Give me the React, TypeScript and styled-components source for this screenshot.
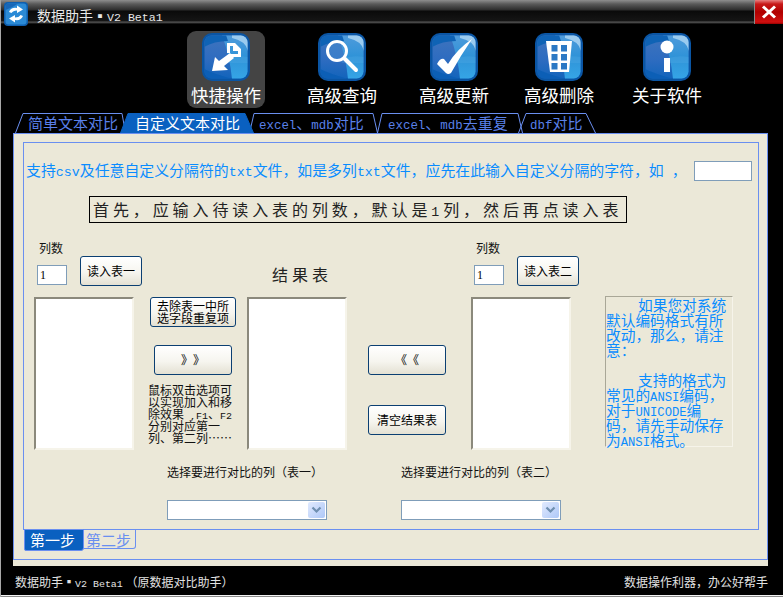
import React from "react";
import styled, { createGlobalStyle } from "styled-components";

const CJK = `"Noto Sans CJK SC", "Liberation Sans", sans-serif`;
const BLUE_LINE = "#6a8ff0";
const TEXT_BLUE = "#0a8cff";

const Global = createGlobalStyle`
  html, body { margin: 0; padding: 0; background: #000; }
  body { font-family: ${CJK}; text-spacing-trim: space-all; text-autospace: no-autospace; font-feature-settings: "palt" 0; }
  * { box-sizing: border-box; }
`;

const Window = styled.div`
  width: 783px;
  height: 597px;
  background: #000;
  border-left: 1px solid #a8a8a8;
  display: flex;
  flex-direction: column;
  overflow: hidden;
`;

const Latin = styled.span`
  font-family: "Liberation Mono", monospace;
  font-size: 0.83em;
  line-height: 0;
`;

const HintLatin = styled(Latin)`
  font-size: 13.3px;
`;

const TitleBar = styled.div`
  height: 24px;
  flex: none;
  display: flex;
  align-items: flex-start;
  padding-left: 3px;
  background: linear-gradient(180deg, #8e8e8e 0, #5a5a5a 4px, #2c2c2c 10px, #0a0a0a 11px, #151515 21px, #5a5a5a 22px, #333 23px, #000 24px);
`;

const AppIconWrap = styled.div`
  width: 24px;
  height: 24px;
  margin-top: 2px;
  flex: none;
  position: relative;
  z-index: 2;
`;

const Title = styled.div`
  margin-left: 9px;
  font-size: 14px;
  line-height: 16px;
  margin-top: 7px;
  color: #e8e8e8;
  white-space: pre;
`;

const CloseButton = styled.div`
  margin-left: auto;
  width: 29px;
  height: 24px;
  border-left: 1px solid #8a8a8a;
  display: flex;
  align-items: center;
  justify-content: center;
  background: linear-gradient(180deg, #e88080 0, #c81818 4px, #b00000 12px, #d01010 22px, #900 24px);
`;

const Toolbar = styled.div`
  height: 89px;
  flex: none;
  display: flex;
  padding: 7px 0 0 0;
`;

const ToolItem = styled.div<{ $gap: number; $active?: boolean }>`
  width: 78px;
  height: 77px;
  margin-left: ${(p) => p.$gap}px;
  border-radius: 9px;
  background: ${(p) => (p.$active ? "#444444" : "transparent")};
  display: flex;
  flex-direction: column;
  align-items: center;
  padding-top: 2px;
`;

const ToolLabel = styled.div`
  font-size: 17.5px;
  line-height: 24px;
  margin-top: 2px;
  color: #fff;
  white-space: nowrap;
`;

const TabsRow = styled.div`
  height: 20px;
  flex: none;
  display: flex;
  padding-left: 14px;
`;

const Tab = styled.div<{ $width: number; $pull: number; $pad: number; $active?: boolean }>`
  width: ${(p) => p.$width}px;
  height: 20px;
  margin-left: ${(p) => -p.$pull}px;
  padding-left: ${(p) => p.$pad}px;
  position: relative;
  z-index: ${(p) => (p.$active ? 1 : 0)};
  font-size: 15px;
  line-height: 20px;
  white-space: nowrap;
  color: ${(p) => (p.$active ? "#fff" : "#5a80ea")};
`;

const TabShape = styled.svg`
  position: absolute;
  left: 0;
  top: 0;
  z-index: -1;
`;

const TabText = styled.span`
  position: relative;
`;

const Panel = styled.div`
  width: 755px;
  height: 433px;
  margin-left: 12px;
  flex: none;
  background: #ebe8d8;
`;

const Frame = styled.div`
  height: 427px;
  border: 1px solid ${BLUE_LINE};
  padding: 8px 8px 0 9px;
`;

const InnerPanel = styled.div`
  height: 388px;
  border: 1px solid ${BLUE_LINE};
`;

const HintRow = styled.div`
  margin-top: 18px;
  height: 20px;
  padding: 0 6px 0 2px;
  display: flex;
  align-items: flex-start;
`;

const HintText = styled.div`
  font-size: 14.9px;
  line-height: 18px;
  color: ${TEXT_BLUE};
  white-space: pre;
`;

const TextInput = styled.input<{ $width: number }>`
  width: ${(p) => p.$width}px;
  height: 20px;
  padding: 0 2px;
  border: 1px solid #7f9db9;
  background: #fff;
  font-family: "Liberation Serif", serif;
  font-size: 12px;
  color: #000;
  outline: none;
`;

const HintInput = styled(TextInput)`
  margin-left: auto;
`;

const Notice = styled.div`
  width: 538px;
  height: 27px;
  margin: 15px 0 0 65px;
  border: 1px solid #000;
  padding-left: 3px;
  font-size: 16px;
  line-height: 25px;
  letter-spacing: 3.9px;
  color: #222;
  white-space: nowrap;
`;

const FormGrid = styled.div`
  margin: 17px 0 0 10px;
  display: grid;
  grid-template-columns: 100px 16px 86px 11px 100px 21px 78px 25px 100px 34px 128px;
  grid-template-rows: 57px 153px;
`;

const ReadGroup = styled.div<{ $col: string }>`
  grid-column: ${(p) => p.$col};
  grid-row: 1;
  display: flex;
  align-items: flex-end;
  gap: 13px;
  padding: 0 0 11px 3px;
  white-space: nowrap;
`;

const ColumnCount = styled.div`
  height: 45px;
  margin-bottom: 1px;
  display: flex;
  flex-direction: column;
  justify-content: space-between;
`;

const SmallLabel = styled.div`
  font-size: 12px;
  line-height: 16px;
  margin: 0 0 0 2px;
  color: #111;
`;

const ActionButton = styled.div<{ $width: number; $height?: number }>`
  width: ${(p) => p.$width}px;
  height: ${(p) => p.$height ?? 30}px;
  flex: none;
  border: 1px solid #0b3f72;
  border-radius: 3px;
  background: linear-gradient(180deg, #ffffff 0%, #f6f5ef 55%, #e4e1d3 100%);
  display: flex;
  align-items: center;
  justify-content: center;
  text-align: center;
  font-size: 12px;
  line-height: 12.5px;
  color: #000;
`;

const ResultTitle = styled.div`
  grid-column: 5;
  grid-row: 1;
  padding: 24px 0 0 25px;
  font-size: 16px;
  line-height: 20px;
  letter-spacing: 4px;
  color: #222;
  white-space: nowrap;
`;

const ListBox = styled.div<{ $col: number }>`
  grid-column: ${(p) => p.$col};
  grid-row: 2;
  background: #fff;
  border-style: solid;
  border-width: 2px;
  border-color: #8b897c #f6f4ea #f6f4ea #8b897c;
`;

const MiddleStack = styled.div<{ $col: number }>`
  grid-column: ${(p) => p.$col};
  grid-row: 2;
  display: flex;
  flex-direction: column;
  align-items: center;
`;

const MoveButton = styled(ActionButton)`
  margin-top: 18px;
`;

const ClearButton = styled(ActionButton)`
  margin-top: 30px;
`;

const SideStack = styled(MiddleStack)`
  padding-top: 48px;
`;

const HelpText = styled.div`
  width: 90px;
  margin: 9px 0 0 0;
  font-size: 12px;
  line-height: 12px;
  color: #111;
  white-space: nowrap;
`;

const NoteBox = styled.div`
  grid-column: 11;
  grid-row: 2;
  height: 151px;
  margin-top: -1px;
  border-style: solid;
  border-width: 1px;
  border-color: #a9a797 #f6f4ea #f6f4ea #a9a797;
  font-size: 14.7px;
  line-height: 15px;
  color: ${TEXT_BLUE};
  white-space: nowrap;
`;

const NoteIndent = styled.span`
  display: inline-block;
  width: 32px;
`;

const SelectRow = styled.div`
  margin-top: 15px;
  padding-left: 143px;
  display: flex;
  gap: 74px;
`;

const SelectGroup = styled.div`
  width: 160px;
  display: flex;
  flex-direction: column;
  gap: 21px;
`;

const SelectLabel = styled.div`
  font-size: 12px;
  line-height: 14px;
  color: #111;
  white-space: nowrap;
`;

const SelectBox = styled.div`
  height: 20px;
  border: 1px solid #7f9db9;
  background: #fff;
  display: flex;
  justify-content: flex-end;
  padding: 1px;
`;

const SelectArrow = styled.div`
  width: 17px;
  height: 16px;
  border-radius: 2px;
  background: linear-gradient(135deg, #e1eafe, #aec8f7);
  display: flex;
  align-items: center;
  justify-content: center;
`;

const StepTabs = styled.div`
  margin: -1px 0 0 1px;
  display: flex;
  align-items: flex-start;
  position: relative;
`;

const StepTab = styled.div<{ $active?: boolean }>`
  width: ${(p) => (p.$active ? 60 : 52)}px;
  height: ${(p) => (p.$active ? 22 : 20)}px;
  padding-left: ${(p) => (p.$active ? 5 : 2)}px;
  font-size: 15px;
  line-height: 20px;
  white-space: nowrap;
  color: ${(p) => (p.$active ? "#fff" : "#6a8ff0")};
  background: ${(p) => (p.$active ? "#0a60c0" : "transparent")};
  border: 1px solid ${BLUE_LINE};
  border-left-width: ${(p) => (p.$active ? 1 : 0)}px;
  border-radius: 0 0 3px ${(p) => (p.$active ? 2 : 0)}px;
`;

const StatusBar = styled.div`
  height: 29px;
  flex: none;
  padding: 8px 15px 0 14px;
  display: flex;
  justify-content: space-between;
  font-size: 12px;
  line-height: 16px;
  color: #e2e2e2;
  white-space: pre;
`;

const BottomEdge = styled.div`
  height: 2px;
  flex: none;
  border-top: 1px solid #f4f4f4;
  background: #8a8a8a;
`;

const Glossy: React.FC<{ id: string; size?: number; children: React.ReactNode }> = ({ id, size = 48, children }) => (
  <svg width={size} height={size} viewBox="0 0 48 48" style={{ display: "block", flex: "none" }}>
    <defs>
      <linearGradient id={`${id}-l`} x1="0" y1="0" x2="0" y2="1">
        <stop offset="0" stopColor="#3f74bd" />
        <stop offset="0.55" stopColor="#2e6cc0" />
        <stop offset="1" stopColor="#1264bb" />
      </linearGradient>
      <linearGradient id={`${id}-r`} x1="0" y1="0" x2="0" y2="1">
        <stop offset="0" stopColor="#4f9bdb" />
        <stop offset="0.5" stopColor="#2f93d8" />
        <stop offset="1" stopColor="#35a5e6" />
      </linearGradient>
      <clipPath id={`${id}-c`}>
        <rect x="2.5" y="2.5" width="43" height="43" rx="7" />
      </clipPath>
    </defs>
    <rect x="0" y="0" width="48" height="48" rx="10" fill="#0a55a4" />
    <g clipPath={`url(#${id}-c)`}>
      <rect x="2" y="2" width="44" height="44" fill={`url(#${id}-l)`} />
      <path d="M20 2 H46 V46 H30 Q28 24 20 2 Z" fill={`url(#${id}-r)`} />
      <path d="M2 2 H24 L26 8 Q12 8 2 14 Z" fill="#0f63b5" />
      <path d="M2 36 Q10 40 30 46 H2 Z" fill="#0c5fb6" />
      <path d="M30 2 H46 V18 Q44 8 30 5 Z" fill="#a9d4f2" opacity="0.85" />
      <path d="M22 26 Q34 22 46 24 V30 H24 Z" fill="#5ab0e8" opacity="0.25" />
    </g>
    {children}
  </svg>
);

const Icons = {
  quick: (
    <Glossy id="quick">
      <path d="M25 10 H33 L39 16 V24 H28 V21 H36 V18 H31 V13 H28 V20 H25 Z" fill="#fff" />
      <path d="M10 38 L13 24 L17 28 L28 20 L32 25 L22 33 L26 37 Z" fill="#fff" />
    </Glossy>
  ),
  search: (
    <Glossy id="search">
      <circle cx="19" cy="18" r="9.5" fill="#4f9fdc" fillOpacity="0.35" stroke="#fff" strokeWidth="3" />
      <path d="M27 26 L38 37" stroke="#fff" strokeWidth="4" strokeLinecap="round" />
    </Glossy>
  ),
  check: (
    <Glossy id="check">
      <path d="M7 31 Q10 25 14 26 L18 31 Q27 16 42 6 Q31 22 21 40 Q18 42 16 40 Z" fill="#fff" />
    </Glossy>
  ),
  trash: (
    <Glossy id="trash">
      <path d="M11 8 H37 L34 39 H15 Z" fill="#fff" />
      {[0, 1, 2].map((row) =>
        [0, 1].map((col) => (
          <rect key={`${row}-${col}`} x={16.5 + col * 9.5} y={12 + row * 9} width="6" height="6.5" fill="#2b78c4" />
        ))
      )}
    </Glossy>
  ),
  info: (
    <Glossy id="info">
      <circle cx="24" cy="14" r="6.5" fill="#fff" />
      <rect x="21" y="25" width="6" height="14" fill="#fff" />
    </Glossy>
  ),
};

const tools = [
  { label: "快捷操作", icon: Icons.quick, gap: 186, active: true },
  { label: "高级查询", icon: Icons.search, gap: 38 },
  { label: "高级更新", icon: Icons.check, gap: 34 },
  { label: "高级删除", icon: Icons.trash, gap: 27 },
  { label: "关于软件", icon: Icons.info, gap: 30 },
];

const tabs = [
  { width: 111, pull: 0, pad: 13, top: [8, 107], text: <>简单文本对比</> },
  { width: 134, pull: 6, pad: 15, top: [8, 125], active: true, text: <>自定义文本对比</> },
  { width: 129, pull: 5, pad: 10, top: [5, 124], text: <><Latin>excel</Latin>、<Latin>mdb</Latin>对比</> },
  { width: 146, pull: 1, pad: 11, top: [5, 141], text: <><Latin>excel</Latin>、<Latin>mdb</Latin>去重复</> },
  { width: 78, pull: 5, pad: 12, top: [8, 68], text: <><Latin>dbf</Latin>对比</> },
];

const Chevron = () => (
  <svg width="11" height="8" viewBox="0 0 11 8">
    <path d="M1.5 1.5 L5.5 5.5 L9.5 1.5" fill="none" stroke="#6f8fb0" strokeWidth="2.2" />
  </svg>
);

export default function App() {
  return (
    <>
      <Global />
      <Window>
        <TitleBar>
          <AppIconWrap>
            <svg width="24" height="24" viewBox="0 0 24 24">
              <rect width="24" height="24" rx="4" fill="#0f5faf" />
              <rect x="1.5" y="1.5" width="21" height="21" rx="3" fill="#2b8ad6" />
              <path d="M1.5 4 Q1.5 1.5 4 1.5 H14 Q8 6 1.5 8 Z" fill="#1866b6" />
              <path d="M5 10 Q7 5 13 6 L13 3.5 L19 7.5 L13 11 L13 8.5 Q9 8.5 7.5 11 Z" fill="#fff" />
              <path d="M19 14 Q17 19 11 18 L11 20.5 L5 16.5 L11 13 L11 15.5 Q15 15.5 16.5 13 Z" fill="#fff" />
            </svg>
          </AppIconWrap>
          <Title>数据助手▪<Latin>V2 Beta1</Latin></Title>
          <CloseButton>
            <svg width="16" height="14" viewBox="0 0 16 14">
              <path d="M2 1.5 L14 12.5 M14 1.5 L2 12.5" stroke="#fff" strokeWidth="3" />
            </svg>
          </CloseButton>
        </TitleBar>

        <Toolbar>
          {tools.map((t) => (
            <ToolItem key={t.label} $gap={t.gap} $active={t.active}>
              {t.icon}
              <ToolLabel>{t.label}</ToolLabel>
            </ToolItem>
          ))}
        </Toolbar>

        <TabsRow>
          {tabs.map((t, i) => (
            <Tab key={i} $width={t.width} $pull={t.pull} $pad={t.pad} $active={t.active}>
              <TabShape width={t.width} height={20}>
                <path
                  d={`M0.5 20 L${t.top[0]} 0.5 H${t.top[1]} L${t.width - 0.5} 20`}
                  fill={t.active ? "#0a60c0" : "none"}
                  stroke={t.active ? "#0a60c0" : "#6a8ff0"}
                />
              </TabShape>
              <TabText>{t.text}</TabText>
            </Tab>
          ))}
        </TabsRow>

        <Panel>
          <Frame>
            <InnerPanel>
              <HintRow>
                <HintText>
                  支持<HintLatin>csv</HintLatin>及任意自定义分隔符的<HintLatin>txt</HintLatin>文件，如是多列<HintLatin>txt</HintLatin>文件，应先在此输入自定义分隔的字符，如<HintLatin> </HintLatin>，
                </HintText>
                <HintInput $width={58} readOnly value="" />
              </HintRow>

              <Notice>
                首先，应输入待读入表的列数，默认是<Latin>1</Latin>列，然后再点读入表
              </Notice>

              <FormGrid>
                <ReadGroup $col="1 / 4">
                  <ColumnCount>
                    <SmallLabel>列数</SmallLabel>
                    <TextInput $width={30} readOnly value="1" />
                  </ColumnCount>
                  <ActionButton $width={62}>读入表一</ActionButton>
                </ReadGroup>
                <ResultTitle>结果表</ResultTitle>
                <ReadGroup $col="9 / 11">
                  <ColumnCount>
                    <SmallLabel>列数</SmallLabel>
                    <TextInput $width={30} readOnly value="1" />
                  </ColumnCount>
                  <ActionButton $width={62}>读入表二</ActionButton>
                </ReadGroup>

                <ListBox $col={1} />
                <MiddleStack $col={3}>
                  <ActionButton $width={86}>去除表一中所<br />选字段重复项</ActionButton>
                  <MoveButton $width={78}>》》</MoveButton>
                  <HelpText>
                    鼠标双击选项可<br />
                    以实现加入和移<br />
                    除效果<Latin>&nbsp;,F1</Latin>、<Latin>F2</Latin><br />
                    分别对应第一<br />
                    列、第二列……
                  </HelpText>
                </MiddleStack>
                <ListBox $col={5} />
                <SideStack $col={7}>
                  <ActionButton $width={78}>《《</ActionButton>
                  <ClearButton $width={78}>清空结果表</ClearButton>
                </SideStack>
                <ListBox $col={9} />
                <NoteBox>
                  <NoteIndent />如果您对系统<br />
                  默认编码格式有所<br />
                  改动，那么，请注<br />
                  意：<br />
                  <br />
                  <NoteIndent />支持的格式为<br />
                  常见的<Latin>ANSI</Latin>编码，<br />
                  对于<Latin>UNICODE</Latin>编<br />
                  码，请先手动保存<br />
                  为<Latin>ANSI</Latin>格式。
                </NoteBox>
              </FormGrid>

              <SelectRow>
                <SelectGroup>
                  <SelectLabel>选择要进行对比的列（表一）</SelectLabel>
                  <SelectBox><SelectArrow><Chevron /></SelectArrow></SelectBox>
                </SelectGroup>
                <SelectGroup>
                  <SelectLabel>选择要进行对比的列（表二）</SelectLabel>
                  <SelectBox><SelectArrow><Chevron /></SelectArrow></SelectBox>
                </SelectGroup>
              </SelectRow>
            </InnerPanel>
            <StepTabs>
              <StepTab $active>第一步</StepTab>
              <StepTab>第二步</StepTab>
            </StepTabs>
          </Frame>
        </Panel>

        <StatusBar>
          <span>数据助手▪<Latin>V2 Beta1</Latin> （原数据对比助手）</span>
          <span>数据操作利器，办公好帮手</span>
        </StatusBar>
        <BottomEdge />
      </Window>
    </>
  );
}
